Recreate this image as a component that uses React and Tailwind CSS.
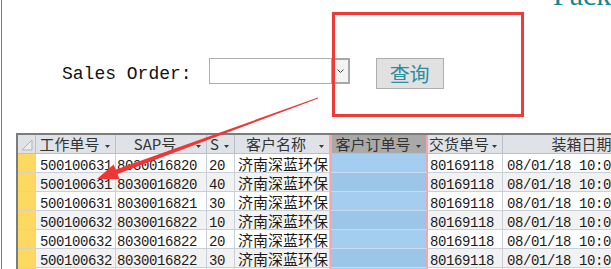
import React from "react";

const cols = [
  { key: "job", label: "工作单号", w: "w-[80px]", pad: "pl-[4px]", mono: true },
  { key: "sap", label: "SAP号", w: "w-[91px]", pad: "pl-[1px]", mono: true },
  { key: "s", label: "S", w: "w-[28px]", pad: "pl-[2px]", mono: true },
  { key: "cust", label: "客户名称", w: "w-[95px]", pad: "pl-[3px]" },
  { key: "po", label: "客户订单号", w: "w-[98px]", pad: "pl-[2px]", active: true },
  { key: "dn", label: "交货单号", w: "w-[75px]", pad: "pl-[2px]", mono: true },
  { key: "date", label: "装箱日期", w: "w-[170px]", pad: "pl-[4px]", mono: true },
];

const rows = [
  ["500100631", "8030016820", "20", "济南深蓝环保", "", "80169118", "08/01/18 10:00:00"],
  ["500100631", "8030016820", "40", "济南深蓝环保", "", "80169118", "08/01/18 10:00:00"],
  ["500100631", "8030016821", "30", "济南深蓝环保", "", "80169118", "08/01/18 10:00:00"],
  ["500100632", "8030016822", "10", "济南深蓝环保", "", "80169118", "08/01/18 10:00:00"],
  ["500100632", "8030016822", "20", "济南深蓝环保", "", "80169118", "08/01/18 10:00:00"],
  ["500100632", "8030016822", "30", "济南深蓝环保", "", "80169118", "08/01/18 10:00:00"],
  ["500100632", "8030016822", "40", "济南深蓝环保", "", "80169118", "08/01/18 10:00:00"],
];

function SortArrow() {
  return (
    <svg width="5" height="3" viewBox="0 0 5 3">
      <polygon points="0,0 5,0 2.5,3" fill="#3a3a3a" />
    </svg>
  );
}

function HeadCell({ col }) {
  return (
    <div
      className={`${col.w} shrink-0 flex items-start h-full ${
        col.active
          ? "bg-[#a9a9a9] border-x-2 border-[#f4a6aa]"
          : "border-r border-[#b9c0ca]"
      }`}
    >
      <span className="flex-1 text-center whitespace-nowrap leading-[17px]">
        {col.label}
      </span>
      <span className="w-[12px] shrink-0 pl-[2px] pt-[10px] flex">
        <SortArrow />
      </span>
    </div>
  );
}

export default function App() {
  return (
    <div className="w-[611px] h-[269px] overflow-hidden bg-white pl-[1px]">
      <div className="relative h-full border-l border-[#4a86c8]">
        {/* heading, mostly scrolled out of view */}
        <div className="flex h-[11px]">
          <div className="-mt-[21px] pl-[551px] whitespace-nowrap font-['Liberation_Serif',serif] text-[30px] leading-[32px] text-[#13868f]">
            Packing List
          </div>
        </div>

        {/* search form */}
        <div className="flex items-start mt-[47px] pl-[60px]">
          <span className="mt-[3px] text-[18px] leading-[26px] font-['Liberation_Mono',monospace] text-[#111] whitespace-nowrap">
            Sales Order:
          </span>
          <div className="ml-[17px] flex">
            <div className="w-[122px] h-[26px] bg-white border border-r-0 border-[#acacac]" />
            <div className="w-[19px] h-[26px] border-2 border-[#a8a8a8] bg-[#f4f4f4] flex items-center justify-center">
              <svg width="7" height="4" viewBox="0 0 7 4">
                <path d="M0.5 0.5 L3.5 3.5 L6.5 0.5" stroke="#444" strokeWidth="1" fill="none" />
              </svg>
            </div>
          </div>
          <button className="ml-[26px] w-[68px] h-[31px] bg-[#e1e1e1] border border-[#adadad] flex items-center justify-center text-[20px] leading-[20px] text-[#2a8c9f] font-['Noto_Sans_CJK_SC',sans-serif]">
            查询
          </button>
        </div>

        {/* datasheet */}
        <div className="mt-[44px] ml-[14px] border-t-2 border-l-2 border-[#7c7c7c] font-['Noto_Sans_CJK_SC',sans-serif] text-[15px]">
          <div className="flex h-[19px] bg-[#dfe3e8] border-b border-[#b9c0ca] text-[#333]">
            <div className="w-[18px] shrink-0 h-full border-r border-[#b9c0ca]">
              <svg width="17" height="18" viewBox="0 0 17 18">
                <polygon points="4,15 14,15 14,5" fill="#ececec" stroke="#b3b3b3" strokeWidth="1" />
              </svg>
            </div>
            {cols.map((c) => (
              <HeadCell key={c.key} col={c} />
            ))}
          </div>

          {rows.map((r, i) => (
            <div
              key={i}
              className={`flex h-[19px] ${i % 2 === 1 ? "bg-[#f2f2f2]" : "bg-white"}`}
            >
              <div className="w-[18px] shrink-0 h-full bg-[#fed962] border-r border-b border-[#d9d3bd]" />
              {cols.map((c, j) =>
                c.active ? (
                  <div
                    key={c.key}
                    className={`${c.w} shrink-0 h-full border-x-2 border-x-[#f4a6aa] border-b border-b-[#c9dcef] ${
                      i % 2 === 1 ? "bg-[#9cc6e7]" : "bg-[#a5cdf0]"
                    }`}
                  />
                ) : (
                  <div
                    key={c.key}
                    className={`${c.w} ${c.pad} shrink-0 h-full overflow-hidden whitespace-nowrap border-r border-b border-[#c8d0dc] text-[#1b1b1b]`}
                  >
                    {c.mono ? (
                      <span className="block font-['Liberation_Mono',monospace] text-[14px] tracking-[-0.4px] leading-[24px]">
                        {r[j]}
                      </span>
                    ) : (
                      <span className="block leading-[19px]">{r[j]}</span>
                    )}
                  </div>
                )
              )}
            </div>
          ))}
        </div>

        {/* annotation: red box and arrow drawn over the screenshot */}
        <div className="absolute left-[330px] top-[12px] w-[192px] h-[105px] border-[3px] border-[#ef3a3a] pointer-events-none" />
        <svg
          className="absolute -left-[2px] top-0 pointer-events-none"
          width="611"
          height="269"
          viewBox="0 0 611 269"
        >
          <polygon
            points="97,179 119.5,179.3 117.6,174 318.1,98.4 317.9,97.6 115.9,169.5 113.6,164.4"
            fill="#ee3636"
          />
        </svg>
      </div>
    </div>
  );
}
